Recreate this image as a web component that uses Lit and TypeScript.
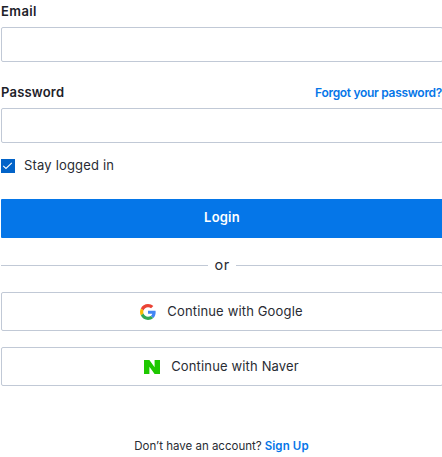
import { LitElement, html, css, svg } from "lit";
import { customElement } from "lit/decorators.js";

const googleIcon = html`<svg width="16" height="16" viewBox="0 0 48 48">
  ${svg`<path fill="#EA4335" d="M24 9.5c3.54 0 6.71 1.22 9.21 3.6l6.85-6.85C35.9 2.38 30.47 0 24 0 14.62 0 6.51 5.38 2.56 13.22l7.98 6.19C12.43 13.72 17.74 9.5 24 9.5z"/>
  <path fill="#4285F4" d="M46.98 24.55c0-1.57-.15-3.09-.38-4.55H24v9.02h12.94c-.58 2.96-2.26 5.48-4.78 7.18l7.73 6c4.51-4.18 7.09-10.36 7.09-17.65z"/>
  <path fill="#FBBC05" d="M10.53 28.59c-.48-1.45-.76-2.99-.76-4.59s.27-3.14.76-4.59l-7.98-6.19C.92 16.46 0 20.12 0 24c0 3.88.92 7.54 2.56 10.78l7.97-6.19z"/>
  <path fill="#34A853" d="M24 48c6.48 0 11.93-2.13 15.89-5.81l-7.73-6c-2.15 1.45-4.92 2.3-8.16 2.3-6.26 0-11.57-4.22-13.47-9.91l-7.98 6.19C6.51 42.62 14.62 48 24 48z"/>`}
</svg>`;

const naverIcon = html`<svg width="16" height="14" viewBox="0 0 16 14">
  <path fill="#1EC800" d="M0 0h5.4l5.2 7.3V0H16v14h-5.4L5.4 6.7V14H0z"/>
</svg>`;

@customElement("app-root")
export class AppRoot extends LitElement {
  static styles = css`
    :host {
      display: block;
      height: 457px;
      overflow: hidden;
      background: #fff;
      color: #292c33;
      font: 13px/20px Inter, "Liberation Sans", sans-serif;
    }
    form {
      display: flex;
      flex-direction: column;
      width: 442px;
      margin-left: 1px;
      padding-top: 1px;
    }
    .row {
      display: flex;
      justify-content: space-between;
      align-items: center;
      height: 20px;
      white-space: nowrap;
    }
    .label { color: #1d2129; font-weight: 600; letter-spacing: 0.2px; }
    .row:first-child .label { letter-spacing: 0.4px; }
    .link { color: #0576e8; font-weight: 600; text-decoration: none; }
    .forgot { font-size: 12px; margin: 2px 1px 0 0; letter-spacing: -0.3px; }
    input.field {
      box-sizing: border-box;
      height: 35px;
      width: 100%;
      margin: 6px 0 20px;
      padding: 0 10px;
      border: 1px solid #c1c9d6;
      border-radius: 2px;
      outline: none;
    }
    input.last { margin-bottom: 13px; }
    .stay { display: flex; align-items: center; height: 20px; gap: 9px; }
    .stay span { padding-bottom: 2px; letter-spacing: 0.18px; }
    .box { width: 14px; height: 14px; background: #0263c8; }
    .box svg, .alt svg { display: block; }
    button {
      display: flex;
      align-items: center;
      justify-content: center;
      box-sizing: border-box;
      width: 100%;
      height: 39px;
      padding: 0;
      font: inherit;
      color: inherit;
    }
    .login {
      margin-top: 23px;
      padding-bottom: 3px;
      border: 0;
      border-radius: 1px;
      background: #0576e8;
      color: #fff;
      font-weight: 600;
      letter-spacing: 0.2px;
    }
    .or { display: flex; align-items: center; gap: 7px; height: 54px; font-size: 14.5px; }
    .or span { letter-spacing: 0.4px; }
    .or::before, .or::after { content: ""; flex: 1; height: 1px; background: #c1c9d6; }
    .alt {
      gap: 11px;
      padding-right: 1px;
      margin-bottom: 16px;
      background: #fff;
      border: 1px solid #c1c9d6;
      border-radius: 2px;
      letter-spacing: 0.15px;
    }
    .alt span { padding-bottom: 2px; }
    .foot {
      display: flex;
      justify-content: center;
      gap: 3px;
      margin: 34px 1px 0 0;
      font-size: 11.5px;
    }
    .foot .link { letter-spacing: 0.12px; }
  `;

  render() {
    return html`<form>
      <div class="row"><label class="label" for="email">Email</label></div>
      <input class="field" id="email" type="email" />
      <div class="row">
        <label class="label" for="password">Password</label>
        <a class="link forgot">Forgot your password?</a>
      </div>
      <input class="field last" id="password" type="password" />
      <div class="stay">
        <div class="box">
          <svg width="14" height="14" viewBox="0 0 14 14">
            <path d="M2.2 6.8 5 9.4 10.8 3.8" fill="none" stroke="#fff" stroke-width="1.1" />
          </svg>
        </div>
        <span>Stay logged in</span>
      </div>
      <button class="login" type="button">Login</button>
      <div class="or"><span>or</span></div>
      <button class="alt" type="button">${googleIcon}<span>Continue with Google</span></button>
      <button class="alt" type="button">${naverIcon}<span>Continue with Naver</span></button>
      <div class="foot"><span>Don’t have an account?</span><a class="link">Sign Up</a></div>
    </form>`;
  }
}
